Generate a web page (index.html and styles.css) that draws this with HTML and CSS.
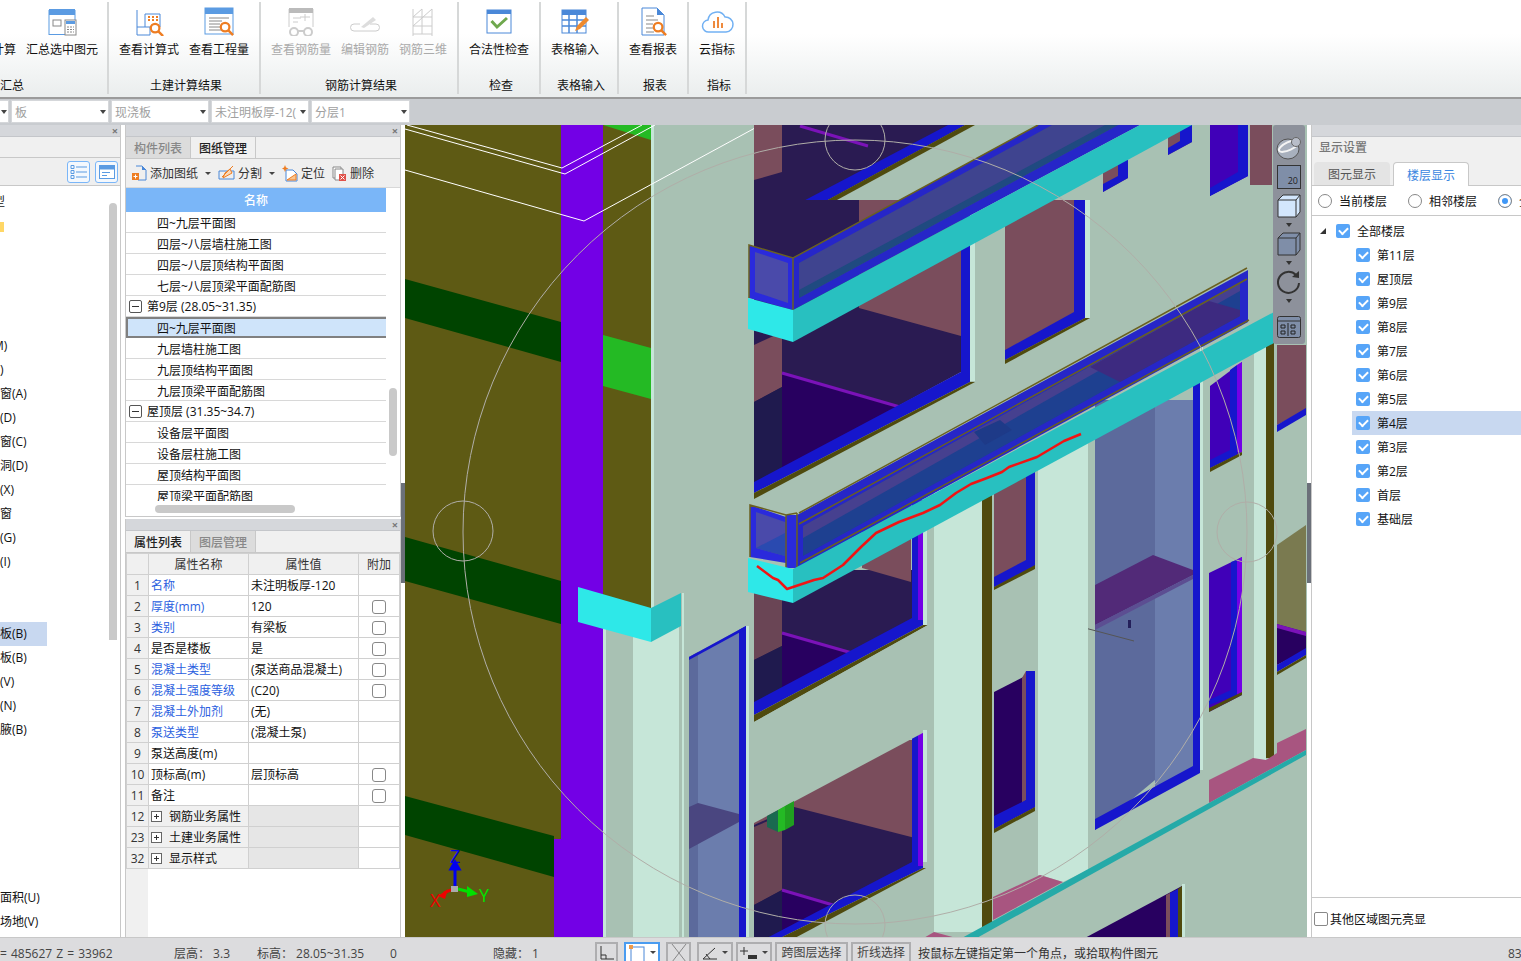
FILE: index.html
```html
<!DOCTYPE html>
<html lang="zh-CN">
  <head>
    <meta charset="UTF-8" />
    <title>GTJ</title>
    <link rel="stylesheet" href="styles.css">
  </head>
  <body>
    <svg class="defs" width="0" height="0">
      <symbol id="mag" viewBox="0 0 16 16">
        <circle cx="6.5" cy="6.5" r="4.6" fill="#fff" stroke="#ee7d22" stroke-width="2.4" />
        <path d="M10 10l5 5" stroke="#ee7d22" stroke-width="2.6" />
      </symbol>
    </svg>
    <div class="app">
      <header class="ribbon">
        <div class="group group1">
          <div class="groupBtns">
            <div class="rbtn rbtnCut"><div class="ricon"></div><span>工程量计算</span></div>
            <div class="rbtn">
              <svg class="ricon" viewBox="0 0 30 30">
                <rect x="2" y="4.500" width="26" height="24" fill="#fff" stroke="#5b9be2" />
                <rect x="2" y="3" width="26" height="6" fill="#5b9be2" />
                <rect x="6" y="14" width="8" height="6" fill="#fff" stroke="#888" />
                <rect x="18" y="14" width="11" height="15" fill="#fff" stroke="#888" />
                <rect x="19" y="15" width="9" height="3" fill="#5b9be2" />
                <path d="M20 21h7M20 23.500h7M20 26h7" stroke="#888" stroke-dasharray="2 1" />
              </svg>
              <span>汇总选中图元</span>
            </div>
          </div>
          <div class="caption captionCut">汇总</div>
        </div>
        <div class="group group2">
          <div class="groupBtns">
            <div class="rbtn">
              <svg class="ricon" viewBox="0 0 30 30">
                <path d="M3 4v25h13v-8H3M11 21V8h15v13" fill="none" stroke="#4a88d8" />
                <path d="M14 11h2M18 11h2M22 11h2M14 14h2M18 14h2M22 14h2" stroke="#ee7d22" stroke-width="2" />
                <use href="#mag" x="15" y="16" width="15" height="15" />
              </svg>
              <span>查看计算式</span>
            </div>
            <div class="rbtn">
              <svg class="ricon" viewBox="0 0 30 30">
                <rect x="1" y="2" width="28" height="26" fill="#fff" stroke="#5b9be2" />
                <rect x="1" y="2" width="28" height="6" fill="#5b9be2" />
                <path d="M5 12h20M5 15h13M5 18h11M5 21h11M5 24h13" stroke="#888" />
                <use href="#mag" x="15" y="15" width="15" height="15" />
              </svg>
              <span>查看工程量</span>
            </div>
          </div>
          <div class="caption">土建计算结果</div>
        </div>
        <div class="group group3">
          <div class="groupBtns disabled">
            <div class="rbtn">
              <svg class="ricon" viewBox="0 0 30 30">
                <path d="M3 3h24v18" fill="none" stroke="#ccc" />
                <path d="M3 3v18" stroke="#ccc" />
                <rect x="3" y="2" width="24" height="5" fill="#bbb" />
                <path d="M7 12h8M7 16h5M14 11h10M19 8v7" stroke="#ccc" />
                <circle cx="8" cy="26" r="4" fill="#fff" stroke="#ccc" stroke-width="2" />
                <circle cx="22" cy="26" r="4" fill="#fff" stroke="#ccc" stroke-width="2" />
                <path d="M12 25h6" stroke="#ccc" stroke-width="2" />
              </svg>
              <span>查看钢筋量</span>
            </div>
            <div class="rbtn">
              <svg class="ricon" viewBox="0 0 30 30">
                <path d="M6 25h-2a3 3 0 0 1 0-7h6M20 18h6a3 3 0 0 1 0 7H6" fill="none" stroke="#ccc" />
                <path d="M11 21l12-10 3 3-12 8z" fill="#ddd" />
              </svg>
              <span>编辑钢筋</span>
            </div>
            <div class="rbtn">
              <svg class="ricon" viewBox="0 0 30 30">
                <path d="M5 3v27M24 3v27M5 11h19M5 20h19M5 28h19M5 11l9-8M14 3v25M5 20l19-17" fill="none" stroke="#ccc" />
              </svg>
              <span>钢筋三维</span>
            </div>
          </div>
          <div class="caption">钢筋计算结果</div>
        </div>
        <div class="group group4">
          <div class="groupBtns">
            <div class="rbtn">
              <svg class="ricon" viewBox="0 0 30 30">
                <rect x="3" y="4" width="24" height="23" fill="#fff" stroke="#4a88d8" />
                <rect x="3" y="4" width="24" height="4" fill="#4a88d8" />
                <path d="M7.500 15l5.500 6 10-9" fill="none" stroke="#6fa84e" stroke-width="3" />
              </svg>
              <span>合法性检查</span>
            </div>
          </div>
          <div class="caption">检查</div>
        </div>
        <div class="group group5">
          <div class="groupBtns">
            <div class="rbtn">
              <svg class="ricon" viewBox="0 0 30 30">
                <rect x="2" y="4" width="24" height="23" fill="#fff" stroke="#4a88d8" />
                <rect x="2" y="4" width="24" height="5" fill="#4a88d8" />
                <path d="M2 14h24M2 20h24M9 9v18M17 9v18" stroke="#4a88d8" stroke-width="1.500" />
                <path d="M15 25l2-5 9-9 3 3-9 9z" fill="#ee8a2e" />
              </svg>
              <span>表格输入</span>
            </div>
          </div>
          <div class="caption">表格输入</div>
        </div>
        <div class="group group6">
          <div class="groupBtns">
            <div class="rbtn">
              <svg class="ricon" viewBox="0 0 30 30">
                <path d="M4 2h15l7 7v20H4z" fill="#fff" stroke="#4a88d8" />
                <path d="M19 2l7 7h-7z" fill="#4a88d8" />
                <path d="M8 10h8M8 14h12M8 18h7M8 22h7M8 26h8" stroke="#888" />
                <use href="#mag" x="14" y="15" width="15" height="15" />
              </svg>
              <span>查看报表</span>
            </div>
          </div>
          <div class="caption">报表</div>
        </div>
        <div class="group group7">
          <div class="groupBtns">
            <div class="rbtn">
              <svg class="ricon cloud" viewBox="0 0 34 26">
                <path d="M9 24a6 6 0 0 1-1-12 9 9 0 0 1 17-3 7.500 7.500 0 0 1 1 15z" fill="#fff" stroke="#72b1f3" stroke-width="1.500" />
                <path d="M14 13v7M18 9v11M22 15v5" stroke="#ee8a3e" stroke-width="2" />
              </svg>
              <span>云指标</span>
            </div>
          </div>
          <div class="caption">指标</div>
        </div>
      </header>

      <div class="filterBar">
        <div class="combo comboFirst"><i></i></div>
        <div class="combo"><span>板</span><i></i></div>
        <div class="combo"><span>现浇板</span><i></i></div>
        <div class="combo"><span>未注明板厚-12(</span><i></i></div>
        <div class="combo comboLast"><span>分层1</span><i></i></div>
      </div>

      <main class="main">
        <section class="panel leftPanel">
          <div class="panelStrip"><b>×</b></div>
          <div class="leftTabs"></div>
          <div class="leftTools">
            <div class="viewBtn">
              <svg width="18" height="16" viewBox="0 0 18 16">
                <path d="M6 3h11M6 8h11M6 13h11" stroke="#5b9be2" />
                <path d="M1 1.500h3v3h-3zM1 6.500h3v3h-3zM1 11.500h3v3h-3z" fill="none" stroke="#5b9be2" />
              </svg>
            </div>
            <div class="viewBtn">
              <svg width="16" height="14" viewBox="0 0 16 14">
                <rect x="0.500" y="0.500" width="15" height="13" fill="#fff" stroke="#5b9be2" />
                <rect x="0.500" y="0.500" width="15" height="4" fill="#5b9be2" />
                <path d="M3 7.500h8M3 10.500h5" stroke="#5b9be2" />
              </svg>
            </div>
          </div>
          <div class="leftList">
            <div class="leftScroll"></div>
            <div class="lrow cutWide">墙型</div>
            <div class="lrow"><em class="chip"></em></div>
            <div class="lrow"></div>
            <div class="lrow"></div>
            <div class="lrow"></div>
            <div class="lrow"></div>
            <div class="lrow cutWide">门M)</div>
            <div class="lrow cutFull">窗)</div>
            <div class="lrow">窗(A)</div>
            <div class="lrow cutFull">洞(D)</div>
            <div class="lrow">窗(C)</div>
            <div class="lrow">洞(D)</div>
            <div class="lrow cutFull">梁(X)</div>
            <div class="lrow">窗</div>
            <div class="lrow cutFull">梁(G)</div>
            <div class="lrow cutFull">梁(I)</div>
            <div class="lrow"></div>
            <div class="lrow"></div>
            <div class="lrow"><span class="hl">板(B)</span></div>
            <div class="lrow">板(B)</div>
            <div class="lrow cutFull">板(V)</div>
            <div class="lrow cutFull">板(N)</div>
            <div class="lrow">腋(B)</div>
            <div class="lrow"></div>
            <div class="lrow"></div>
            <div class="lrow"></div>
            <div class="lrow"></div>
            <div class="lrow"></div>
            <div class="lrow"></div>
            <div class="lrow">面积(U)</div>
            <div class="lrow">场地(V)</div>
          </div>
        </section>

        <div class="midCol">
          <section class="panel drawingPanel">
            <div class="panelStrip"><b>×</b></div>
            <div class="tabs">
              <div class="tab off">构件列表</div>
              <div class="tab on">图纸管理</div>
            </div>
            <div class="drawTools">
              <span class="tool">
                <svg width="15" height="16" viewBox="0 0 15 16"><path d="M4 1h6l4 4v10H6" fill="none" stroke="#4a88d8" /><path d="M10 1l4 4h-4z" fill="#4a88d8" /><rect x="0" y="8" width="7" height="7" fill="#ee7d22" /><path d="M3.500 9.500v4M1.500 11.500h4" stroke="#fff" /></svg>
                添加图纸<i class="caret"></i>
              </span>
              <span class="tool">
                <svg width="17" height="16" viewBox="0 0 17 16"><path d="M1 6h15v8H1z" fill="none" stroke="#4a88d8" /><path d="M4 12l8-8 3-3M5 13l2-5 5-4 2 4z" fill="#fbd9b8" stroke="#ee7d22" /></svg>
                分割<i class="caret"></i>
              </span>
              <span class="tool">
                <svg width="16" height="17" viewBox="0 0 16 17"><path d="M4 5h7l4 4v7H4z" fill="#fff" stroke="#4a88d8" /><path d="M5 15l9-6v6z" fill="#f9c58f" stroke="#ee7d22" /><path d="M3 0l1 2.500 2.500 1-2.500 1-1 2.500-1-2.500-2-1 2-1z" fill="#ee7d22" /></svg>
                定位
              </span>
              <span class="tool">
                <svg width="15" height="15" viewBox="0 0 15 15"><path d="M1 1h8v11H1z" fill="#fff" stroke="#888" /><path d="M3 3h8v11H3z" fill="#fff" stroke="#888" /><rect x="7" y="8" width="7" height="7" fill="#e0524a" /><path d="M8.500 9.500l4 4m0-4l-4 4" stroke="#fff" /></svg>
                删除
              </span>
            </div>
            <div class="drawList">
              <div class="drawHead">名称</div>
              <div class="drow">四~九层平面图</div>
              <div class="drow">四层~八层墙柱施工图</div>
              <div class="drow">四层~八层顶结构平面图</div>
              <div class="drow">七层~八层顶梁平面配筋图</div>
              <div class="drow grp"><i class="minus"></i>第9层 (28.05~31.35)</div>
              <div class="drow sel">四~九层平面图</div>
              <div class="drow">九层墙柱施工图</div>
              <div class="drow">九层顶结构平面图</div>
              <div class="drow">九层顶梁平面配筋图</div>
              <div class="drow grp"><i class="minus"></i>屋顶层 (31.35~34.7)</div>
              <div class="drow">设备层平面图</div>
              <div class="drow">设备层柱施工图</div>
              <div class="drow">屋顶结构平面图</div>
              <div class="drow">屋顶梁平面配筋图</div>
              <div class="vbar"></div>
              <div class="hbarTrack"><div class="hbar"></div></div>
            </div>
          </section>

          <section class="panel propPanel">
            <div class="panelStrip"><b>×</b></div>
            <div class="tabs">
              <div class="tab on">属性列表</div>
              <div class="tab off">图层管理</div>
            </div>
            <div class="propBody">
              <table class="props">
                <tr class="phead"><th></th><th>属性名称</th><th>属性值</th><th>附加</th></tr>
                <tr><td class="n">1</td><td class="lnk">名称</td><td>未注明板厚-120</td><td></td></tr>
                <tr><td class="n">2</td><td class="lnk">厚度(mm)</td><td>120</td><td class="ck"><i></i></td></tr>
                <tr><td class="n">3</td><td class="lnk">类别</td><td>有梁板</td><td class="ck"><i></i></td></tr>
                <tr><td class="n">4</td><td>是否是楼板</td><td>是</td><td class="ck"><i></i></td></tr>
                <tr><td class="n">5</td><td class="lnk">混凝土类型</td><td>(泵送商品混凝土)</td><td class="ck"><i></i></td></tr>
                <tr><td class="n">6</td><td class="lnk">混凝土强度等级</td><td>(C20)</td><td class="ck"><i></i></td></tr>
                <tr><td class="n">7</td><td class="lnk">混凝土外加剂</td><td>(无)</td><td></td></tr>
                <tr><td class="n">8</td><td class="lnk">泵送类型</td><td>(混凝土泵)</td><td></td></tr>
                <tr><td class="n">9</td><td>泵送高度(m)</td><td></td><td></td></tr>
                <tr><td class="n">10</td><td>顶标高(m)</td><td>层顶标高</td><td class="ck"><i></i></td></tr>
                <tr><td class="n">11</td><td>备注</td><td></td><td class="ck"><i></i></td></tr>
                <tr class="sect"><td class="n">12</td><td><i class="plus"></i>钢筋业务属性</td><td></td><td></td></tr>
                <tr class="sect"><td class="n">23</td><td><i class="plus"></i>土建业务属性</td><td></td><td></td></tr>
                <tr class="sect"><td class="n">32</td><td><i class="plus"></i>显示样式</td><td></td><td></td></tr>
              </table>
              <div class="numFill"></div>
            </div>
          </section>
        </div>

        <div class="viewport">
          <svg class="scene" width="902" height="814" viewBox="405 125 902 814">
            <rect x="405" y="125" width="902" height="814" fill="#a8c1b3" />
            <!-- left wall -->
            <rect x="405" y="125" width="198" height="814" fill="#5e5a14" />
            <rect x="603" y="125" width="48" height="490" fill="#5e5a14" />
            <path d="M405 279L561 322V362L405 318zM405 537L561 581V624L405 581zM405 796L554 836V877L405 835z" fill="#004400" />
            <path d="M603 335L651 348V399L603 386zM603 125L651 140V125z" fill="#24ba24" />
            <path d="M561 125H603V939H554V839H561z" fill="#7300e6" />
            <rect x="651" y="125" width="3" height="485" fill="#c6e6d8" />
            <path d="M407 125L562 168L642 125M405 129L565 174L655 125M405 170L584 221L755 128" fill="none" stroke="#fff" />
            <!-- lower column -->
            <rect x="603" y="615" width="3" height="324" fill="#c6e6d8" />
            <rect x="606" y="615" width="27" height="324" fill="#a8c1b3" />
            <rect x="633" y="625" width="46" height="314" fill="#c6e6d8" />
            <rect x="682" y="593" width="2" height="346" fill="#c6e6d8" />
            <!-- narrow window -->
            <path d="M689 657L746 626V939H689z" fill="#6b7dad" />
            <path d="M689 657L698 652V939H689z" fill="#5c6a9c" />
            <path d="M689 807L698 803L739 814V822L689 849z" fill="#4a4680" />
            <path d="M739 630L746 626V939H739z" fill="#1616cc" />
            <path d="M689 657L746 626V629L689 660z" fill="#1616cc" />
            <rect x="746" y="626" width="3" height="313" fill="#c6e6d8" />
            <!-- row 0 -->
            <path d="M754 125H965L754 240z" fill="#2a1b52" />
            <path d="M754 125H782V172L754 180z" fill="#7a4d5c" />
            <path d="M800 126L868 146" stroke="#7b12b8" stroke-width="3" />
            <path d="M754 227L948 125H965L754 240z" fill="#1616cc" />
            <path d="M754 240L965 125H975L754 245z" fill="#4f4a0e" />
            <!-- row 1 -->
            <path d="M754 200H961V372L754 484z" fill="#2a1b52" />
            <path d="M859 308L961 336V200H859z" fill="#7a4d5c" />
            <path d="M754 345L782 332V387L754 402z" fill="#7a4d5c" />
            <path d="M754 402L782 387V470L754 484z" fill="#1f1a4e" />
            <path d="M782 374L900 408L782 472z" fill="#280060" />
            <path d="M782 373L900 407" stroke="#7b12b8" stroke-width="3" />
            <path d="M961 200H970V382L754 493V482L961 372z" fill="#1616cc" />
            <path d="M754 493L970 382H975L754 499z" fill="#4f4a0e" />
            <rect x="970" y="200" width="5" height="181" fill="#c6e6d8" />
            <!-- row 1 middle -->
            <path d="M1005 200H1085V318L1005 360z" fill="#7a4d5c" />
            <path d="M1074 200H1085V318L1005 360V350L1074 312z" fill="#1616cc" />
            <path d="M1005 360L1085 318H1090L1005 364z" fill="#4f4a0e" />
            <rect x="1085" y="200" width="5" height="118" fill="#c6e6d8" />
            <!-- row 2 -->
            <path d="M754 570H923V622L754 712z" fill="#2a1b52" />
            <path d="M862 568L911 582V500H862z" fill="#7a4d5c" />
            <path d="M754 590H782V646L754 660z" fill="#6a4555" />
            <path d="M754 660L782 646V695L754 707z" fill="#1f1a4e" />
            <path d="M782 634L852 654L782 692z" fill="#280060" />
            <path d="M782 633L852 653" stroke="#7b12b8" stroke-width="3" />
            <path d="M912 500H923V625L754 715V702L912 618z" fill="#1616cc" />
            <path d="M918 500H923V620H918z" fill="#7300e6" />
            <path d="M754 715L923 625H928L754 722z" fill="#4f4a0e" />
            <rect x="923" y="500" width="4" height="125" fill="#c6e6d8" />
            <!-- row 3 -->
            <path d="M754 800H923V860L778 939H754z" fill="#2a1b52" />
            <path d="M754 740H923V840L794 807L754 825z" fill="#7a4d5c" />
            <path d="M754 827L782 815V890L754 905z" fill="#6a4555" />
            <path d="M754 905L782 890V939H754z" fill="#1f1a4e" />
            <path d="M782 891L833 906L782 933z" fill="#280060" />
            <path d="M782 890L833 905" stroke="#7b12b8" stroke-width="3" />
            <path d="M912 730H923V868L778 939H765L912 862z" fill="#1616cc" />
            <path d="M918 730H923V866H918z" fill="#7300e6" />
            <path d="M778 939L923 868H926L793 939z" fill="#4f4a0e" />
            <!-- sage band between row 2 and 3 -->
            <path d="M754 722L928 625H934V727L754 823z" fill="#a8c1b3" />
            <rect x="923" y="730" width="4" height="132" fill="#c6e6d8" />
            <path d="M767 816L778 810V832L767 827z" fill="#1a6a50" />
            <path d="M778 810L785 806V830L778 832z" fill="#24ba24" />
            <path d="M785 806L794 801V825L785 830z" fill="#209e20" />
            <!-- windows, column side -->
            <path d="M994 470H1035V567L994 587z" fill="#7a4d5c" />
            <path d="M1026 470H1035V567L994 587V577L1026 560z" fill="#1616cc" />
            <path d="M994 587L1035 565V569L994 590z" fill="#4f4a0e" />
            <path d="M994 692L1035 671V807L994 829z" fill="#280060" />
            <path d="M1022 678L1026 671V800L1022 805z" fill="#7a4d5c" />
            <path d="M1026 671L1035 671V807L994 829V816L1026 800z" fill="#1616cc" />
            <path d="M994 829L1035 807V811L994 833z" fill="#4f4a0e" />
            <!-- big window -->
            <path d="M1095 400H1155V780L1095 830z" fill="#5c6a9c" />
            <path d="M1155 400H1193V770L1155 790z" fill="#6b7dad" />
            <path d="M1095 585L1153 555L1193 570V575L1095 625z" fill="#522a78" />
            <path d="M1095 625L1193 575V579L1095 630z" fill="#5c4e92" />
            <path d="M1193 360H1200V773L1095 830V819L1193 766z" fill="#1616cc" />
            <path d="M1085 628L1134 641" stroke="#555" />
            <rect x="1128" y="620" width="3" height="8" fill="#24205a" />
            <!-- far right windows -->
            <path d="M1210 386L1242 362V452L1210 468z" fill="#4000b8" />
            <path d="M1230 370L1237 365V455L1210 468V460L1230 450z" fill="#1616cc" />
            <path d="M1237 365L1242 362V452H1237z" fill="#7300e6" />
            <path d="M1210 468L1242 452V455L1210 472z" fill="#4f4a0e" />
            <path d="M1209 573L1242 557V695L1209 712z" fill="#4000b8" />
            <path d="M1231 562L1237 560V695L1209 705V700L1231 690z" fill="#1616cc" />
            <path d="M1237 560L1242 557V695H1237z" fill="#7300e6" />
            <path d="M1209 708L1242 692V695L1209 712z" fill="#4f4a0e" />
            <rect x="1254" y="340" width="12" height="420" fill="#c6e6d8" />
            <rect x="1266" y="340" width="8" height="418" fill="#4f4a0e" />
            <path d="M1277 345H1306V410L1277 425z" fill="#7a4d5c" />
            <path d="M1277 425L1306 408V415L1277 432z" fill="#1616cc" />
            <path d="M1277 545L1306 525V632L1277 624z" fill="#7a7a50" />
            <path d="M1277 624L1306 632V650L1277 665z" fill="#280060" />
            <path d="M1277 624L1306 632V636L1277 628z" fill="#7b12b8" />
            <path d="M1277 665L1306 648V655L1277 672z" fill="#1616cc" />
            <path d="M1277 672L1306 655V658L1277 675z" fill="#4f4a0e" />
            <!-- pale columns -->
            <rect x="934" y="490" width="48" height="442" fill="#c6e6d8" />
            <rect x="982" y="490" width="10" height="438" fill="#4f4a0e" />
            <path d="M1038 440H1088V870L1063 882L1040 875H1038z" fill="#c6e6d8" />
            <rect x="1200" y="340" width="3" height="430" fill="#c6e6d8" />
            <!-- pink plinth, teal line -->
            <path d="M1209 780L1253 758L1266 760L1277 753V743L1306 729V750L1209 803z" fill="#a85580" />
            <path d="M993 897L1040 875L1063 882L993 920z" fill="#a85580" />
            <path d="M922 939L934 932L960 939z" fill="#a85580" />
            <path d="M975 939L1306 755V939z" fill="#a8c1b3" />
            <path d="M960 939L1306 750V755L975 939z" fill="#25aaa8" />
            <path d="M1083 939L1182 886V939z" fill="#280060" />
            <path d="M1166 895L1170 893V939H1166z" fill="#7a4d5c" />
            <path d="M1170 893L1178 889V939H1170z" fill="#1616cc" />
            <path d="M1178 889L1182 886V939H1178z" fill="#4f4a0e" />
            <rect x="1182" y="884" width="3" height="55" fill="#c6e6d8" />
            <!-- upper right pieces over the sage -->
            <path d="M1103 160H1128V178L1103 192z" fill="#7a4d5c" />
            <path d="M1118 160H1128V178L1103 192V184L1118 176z" fill="#1616cc" />
            <path d="M1168 125H1192V142L1168 155z" fill="#7a4d5c" />
            <path d="M1180 125H1192V142L1168 155V148L1180 141z" fill="#1616cc" />
            <path d="M1210 125H1248V176L1210 196z" fill="#4000b8" />
            <path d="M1238 125H1248V176L1210 196V188L1238 172z" fill="#1616cc" />
            <rect x="1250" y="125" width="22" height="60" fill="#7a4d5c" />
            <!-- balcony 1 -->
            <path d="M793 258L1038 125H1140L793 310z" fill="#2626c8" />
            <path d="M799 263L1052 125H1118L799 298z" fill="#3f448f" />
            <path d="M799 290L1105 125H1118L799 298z" fill="#1f4a80" />
            <path d="M749 245L793 258V310L749 298z" fill="#2a2adc" />
            <path d="M755 252L788 263V303L755 292z" fill="#4a4aaa" />
            <path d="M749 298L749 245L793 258L1038 125M793 258V310" fill="none" stroke="#6a6020" stroke-width="1.500" />
            <path d="M748 298L793 310V342L748 329z" fill="#2ee8e8" />
            <path d="M793 310L1140 125H1192L793 342z" fill="#28c0c0" />
            <!-- balcony 2 -->
            <path d="M797 515L1248 270V322L797 568z" fill="#2626c8" />
            <path d="M803 526L1240 283V316L803 556z" fill="#1e4090" />
            <path d="M803 526L1240 283V291L803 538z" fill="#46408f" />
            <path d="M1090 367L1209 301L1240 310V316L1120 382z" fill="#3d2a80" />
            <path d="M974 432L1000 420L1012 430L985 445z" fill="#1e3a88" />
            <path d="M799 513L1247 268M799 524L1247 279" stroke="#6a6020" stroke-width="1.500" />
            <path d="M800 563L1249 320" stroke="#6a6020" stroke-width="1.500" />
            <path d="M750 505L786 517V563L750 557z" fill="#2a2adc" />
            <path d="M756 512L785 522V556L756 548z" fill="#4a4aaa" />
            <path d="M756 548L785 533V556z" fill="#2a4ab0" />
            <path d="M786 515H797V568H786z" fill="#2a2adc" />
            <path d="M750 557V505L786 515L797 513M786 515V568M797 513V568" fill="none" stroke="#6a6020" stroke-width="1.500" />
            <path d="M748 558L793 569V603L748 592z" fill="#2ee8e8" />
            <path d="M793 569L1274 312V343L793 603z" fill="#28c0c0" />
            <!-- red line -->
            <path d="M757 566L773 578L778 580L787 589L814 580L823 578L843 565L861 547L876 533L899 522L923 513L940 505L956 493L971 484L987 478L1002 472L1009 467L1037 457L1064 441L1081 434" fill="none" stroke="#f01414" stroke-width="2.500" stroke-linejoin="round" />
            <!-- wedge -->
            <path d="M578 587L651 608V642L578 622z" fill="#2ee8e8" />
            <path d="M651 608L681 593V626L651 642z" fill="#28c0c0" />
            <!-- orbit -->
            <g fill="none" stroke="#b0aea8">
              <circle cx="855" cy="532" r="392" />
              <circle cx="463" cy="531" r="30" />
              <circle cx="855" cy="140" r="30" />
              <circle cx="1247" cy="532" r="30" />
              <circle cx="855" cy="925" r="30" />
            </g>
            <!-- axis -->
            <path d="M455 886V868M451 869L455 862L459 869z" stroke="#0000f0" stroke-width="3" fill="#0000f0" />
            <path d="M458 889L470 892" stroke="#00e000" stroke-width="3" />
            <path d="M467 886L478 894L467 897z" fill="#00e000" />
            <path d="M453 889L444 893" stroke="#f00000" stroke-width="3" />
            <path d="M448 889L438 896L445 899z" fill="#f00000" />
            <rect x="451" y="886" width="7" height="6" fill="#aaa" />
            <text class="axis axisZ" x="450" y="863">Z</text>
            <text class="axis axisX" x="430" y="907">X</text>
            <text class="axis axisY" x="479" y="902">Y</text>
          </svg>

          <div class="viewTools">
            <svg width="26" height="24" viewBox="0 0 26 24">
              <ellipse cx="12" cy="13" rx="11" ry="10" fill="#a8b0bd" stroke="#555" />
              <ellipse cx="13" cy="10" rx="11" ry="4" transform="rotate(-25 13 10)" fill="none" stroke="#f4f4f4" stroke-width="2" />
              <circle cx="20" cy="6" r="4.500" fill="#b8bdc8" stroke="#666" />
            </svg>
            <div class="tool2d">20</div>
            <svg width="24" height="24" viewBox="0 0 24 24">
              <path d="M1 6h18v17H1zM1 6l5-5h17v17l-4 5" fill="#d3e6fc" stroke="#333" />
              <path d="M19 6l4-5" stroke="#333" />
            </svg>
            <i class="vcaret"></i>
            <svg width="24" height="24" viewBox="0 0 24 24">
              <path d="M1 6h18v17H1zM1 6l5-5h17v17l-4 5M19 6l4-5" fill="#7f8ea8" stroke="#333" />
            </svg>
            <i class="vcaret"></i>
            <svg width="24" height="24" viewBox="0 0 24 24">
              <path d="M19 5a10.500 10.500 0 1 0 3 8" fill="none" stroke="#333" stroke-width="2" />
              <path d="M15 7l7 1V1z" fill="#333" />
            </svg>
            <i class="vcaret"></i>
            <svg class="toolLast" width="24" height="22" viewBox="0 0 24 22">
              <rect x="0.500" y="0.500" width="23" height="21" rx="2" fill="#7f8ea8" stroke="#333" />
              <path d="M1 5h22" stroke="#333" />
              <path d="M4 9h4v3H4zM4 15h4v3H4zM14 9h4v3h-4zM14 15h4v3h-4zM11 7v13" fill="none" stroke="#222" />
            </svg>
          </div>
        </div>

        <section class="panel rightPanel">
          <div class="panelStrip"></div>
          <div class="rightTitle">显示设置</div>
          <div class="rightTabs">
            <div class="rtab">图元显示</div>
            <div class="rtab rtabOn">楼层显示</div>
          </div>
          <div class="radios">
            <label class="radio"><i></i>当前楼层</label>
            <label class="radio"><i></i>相邻楼层</label>
            <label class="radio radioOn"><i></i>全部楼层</label>
          </div>
          <div class="tree">
            <div class="trow root"><em class="tri"></em><i class="cb"></i>全部楼层</div>
            <div class="trow"><i class="cb"></i>第11层</div>
            <div class="trow"><i class="cb"></i>屋顶层</div>
            <div class="trow"><i class="cb"></i>第9层</div>
            <div class="trow"><i class="cb"></i>第8层</div>
            <div class="trow"><i class="cb"></i>第7层</div>
            <div class="trow"><i class="cb"></i>第6层</div>
            <div class="trow"><i class="cb"></i>第5层</div>
            <div class="trow cur"><i class="cb"></i>第4层</div>
            <div class="trow"><i class="cb"></i>第3层</div>
            <div class="trow"><i class="cb"></i>第2层</div>
            <div class="trow"><i class="cb"></i>首层</div>
            <div class="trow"><i class="cb"></i>基础层</div>
          </div>
          <div class="rightFoot"><i class="plainCb"></i>其他区域图元亮显</div>
        </section>
        <div class="grip gripLeft"></div>
        <div class="grip gripRight"></div>
      </main>

      <footer class="status">
        <span class="stCoord">= 485627 Z = 33962</span>
        <span class="stFloor">层高：&nbsp;3.3</span>
        <span class="stElev">标高：&nbsp;28.05~31.35</span>
        <span class="stZero">0</span>
        <span class="stHide">隐藏：&nbsp;1</span>
        <div class="sbtn sbOrtho">
          <svg width="16" height="16" viewBox="0 0 16 16"><path d="M2 1v13h13M2 10h5v4" fill="none" stroke="#333" /></svg>
        </div>
        <div class="sbtn sbSel">
          <svg width="18" height="18" viewBox="0 0 18 18"><rect x="3" y="3" width="13" height="15" fill="#fff" stroke="#4a88d8" /><rect x="1" y="1" width="4" height="4" fill="#ee9a4a" /></svg>
          <i class="caret"></i>
        </div>
        <div class="sbtn sbCross">
          <svg width="20" height="20" viewBox="0 0 20 20"><path d="M3 1l14 18M17 1L3 19" stroke="#888" /></svg>
        </div>
        <div class="sbtn sbDrop">
          <svg width="16" height="16" viewBox="0 0 16 16"><path d="M1 14h14M1 14L13 3M4 9l4 5" fill="none" stroke="#333" /></svg>
          <i class="caret"></i>
        </div>
        <div class="sbtn sbDrop">
          <svg width="18" height="16" viewBox="0 0 18 16"><path d="M4 2v8M0 6h8" stroke="#333" /><rect x="8" y="10" width="9" height="4" fill="#333" /></svg>
          <i class="caret"></i>
        </div>
        <div class="sbtn sbText sbLayer">跨图层选择</div>
        <div class="sbtn sbText sbPoly">折线选择</div>
        <span class="stHint">按鼠标左键指定第一个角点，或拾取构件图元</span>
        <span class="stEnd">83</span>
      </footer>
    </div>
  </body>
</html>
```
FILE: styles.css
```css
* {
  box-sizing: border-box;
}
html,
body {
  margin: 0;
  padding: 0;
  background: #fff;
}
body {
  font-family: "Open Sans", "Noto Sans CJK SC", "Liberation Sans", sans-serif;
  font-size: 12px;
  color: #111;
  overflow: hidden;
}
i,
em {
  font-style: normal;
  display: inline-block;
}
.defs {
  position: absolute;
}
.app {
  width: 1521px;
  height: 961px;
  display: flex;
  flex-direction: column;
  overflow: hidden;
}

/* ribbon */
.ribbon {
  height: 99px;
  flex: none;
  display: flex;
  background: linear-gradient(#fff 0, #fff 35%, #ebeeee 97%);
  border-bottom: 2px solid #9b9b9b;
  padding-top: 2px;
}
.group {
  display: flex;
  flex-direction: column;
  align-items: stretch;
  border-right: 2px solid #d6d8d8;
  margin-bottom: 3px;
  flex: none;
}
.group1 {
  width: 109px;
  overflow: hidden;
}
.group2 {
  width: 152px;
}
.group3 {
  width: 198px;
}
.group4 {
  width: 82px;
}
.group5 {
  width: 78px;
}
.group5 .groupBtns {
  padding-right: 8px;
}
.group6 {
  width: 70px;
}
.group7 {
  width: 58px;
}
.groupBtns {
  display: flex;
  gap: 10px;
  height: 77px;
  justify-content: center;
}
.group1 .groupBtns {
  justify-content: flex-end;
  width: 109px;
  padding-right: 11px;
}
.rbtn {
  display: flex;
  flex-direction: column;
  align-items: center;
  flex: none;
  white-space: nowrap;
  line-height: 18px;
}
.rbtn span {
  margin-top: 5px;
}
.ricon {
  display: block;
  width: 30px;
  height: 30px;
  margin-top: 4px;
}
.cloud {
  width: 34px;
  height: 26px;
  margin: 6px 0 2px;
}
.disabled {
  color: #aaa;
}
.caption {
  text-align: center;
  line-height: 16px;
  padding-left: 4px;
  white-space: nowrap;
}
.captionCut {
  text-align: left;
  padding-left: 0;
}

/* filter bar */
.filterBar {
  height: 26px;
  flex: none;
  display: flex;
  gap: 2px;
  align-items: flex-start;
  padding-top: 1px;
  background: #c9ccd0;
}
.combo {
  width: 98px;
  height: 23px;
  background: #fff;
  border: 1px solid #d5d7da;
  color: #a0a0a0;
  padding: 0 3px;
  line-height: 23px;
  position: relative;
  white-space: nowrap;
  overflow: hidden;
}
.combo span {
  display: block;
  width: 84px;
  height: 21px;
  overflow: hidden;
}
.comboFirst {
  width: 9px;
  border-left: 0;
}
.comboLast {
  width: 99px;
}
.combo i {
  position: absolute;
  right: 2px;
  top: 9px;
  border: 3px solid transparent;
  border-top: 4px solid #444;
  border-bottom: 0;
}
.comboFirst i {
  right: 1px;
}

/* main layout */
.main {
  height: 813px;
  flex: none;
  display: flex;
  gap: 4px;
  background: #fff;
  border-bottom: 1px solid #c8c8c8;
  position: relative;
}
.panel {
  background: #fff;
  display: flex;
  flex-direction: column;
  overflow: hidden;
}
.panelStrip {
  height: 12px;
  flex: none;
  background: #d5d7db;
  border-bottom: 1px solid #c4c6ca;
  text-align: right;
  padding-right: 2px;
  line-height: 11px;
  color: #777;
  font-size: 11px;
}
.panelStrip b {
  font-weight: 700;
}

/* left list */
.leftPanel {
  width: 121px;
  flex: none;
  border-right: 1px solid #c8c8c8;
}
.leftTabs {
  height: 21px;
  background: #f0f0f0;
  border-bottom: 1px solid #c8c8c8;
  flex: none;
}
.leftTools {
  height: 28px;
  flex: none;
  background: #efefef;
  border-bottom: 1px solid #c8c8c8;
  display: flex;
  justify-content: flex-end;
  align-items: center;
  gap: 5px;
  padding-right: 2px;
}
.viewBtn {
  width: 23px;
  height: 22px;
  border: 1px solid #7ab6f8;
  border-radius: 3px;
  background: #f4f8fd;
  display: flex;
  align-items: center;
  justify-content: center;
}
.leftList {
  flex: 1;
  position: relative;
  padding-top: 4px;
  overflow: hidden;
}
.leftScroll {
  position: absolute;
  right: 3px;
  top: 17px;
  width: 8px;
  height: 437px;
  background: #c9c9c9;
  border-radius: 4px 4px 0 0;
}
.lrow {
  height: 24px;
  line-height: 24px;
  white-space: nowrap;
}
.cutFull {
  margin-left: -12px;
}
.cutWide {
  margin-left: -19px;
}
.chip {
  width: 4px;
  height: 10px;
  background: #ffd766;
  vertical-align: middle;
}
.hl {
  display: block;
  width: 47px;
  background: #c8d8f0;
}

/* middle column */
.midCol {
  width: 276px;
  display: flex;
  flex-direction: column;
  gap: 2px;
  flex: none;
}
.drawingPanel {
  height: 392px;
  flex: none;
  border: 1px solid #c8c8c8;
  border-top: 0;
}
.propPanel {
  flex: 1;
  border-right: 1px solid #c8c8c8;
  border-left: 1px solid #c8c8c8;
}
.tabs {
  height: 22px;
  flex: none;
  display: flex;
  background: #f0f0f0;
  border-bottom: 1px solid #c8c8c8;
}
.tab {
  width: 65px;
  text-align: center;
  line-height: 23px;
  font-weight: 500;
  border-right: 1px solid #c8c8c8;
}
.tab.off {
  background: #dcdcdc;
  color: #888;
}
.tab.on {
  background: #f0f0f0;
  color: #222;
}
.drawTools {
  height: 29px;
  flex: none;
  background: #efefef;
  border-bottom: 1px solid #d8d8d8;
  display: flex;
  align-items: center;
  gap: 7px;
  padding-left: 6px;
  color: #333;
}
.tool {
  display: flex;
  align-items: center;
  gap: 3px;
  white-space: nowrap;
}
.caret {
  margin-left: 4px;
  border: 3px solid transparent;
  border-top: 3px solid #444;
  border-bottom: 0;
}
.drawList {
  flex: 1;
  position: relative;
  overflow: hidden;
}
.drawHead {
  width: 260px;
  height: 24px;
  line-height: 26px;
  background: #7ab6f8;
  color: #fff;
  text-align: center;
  font-weight: 500;
}
.drow {
  width: 260px;
  height: 21px;
  padding-top: 1px;
  line-height: 21px;
  border-bottom: 1px solid #d8d8d8;
  padding-left: 31px;
  white-space: nowrap;
}
.drow.grp {
  padding-left: 3px;
  display: flex;
  align-items: center;
  gap: 5px;
}
.drow.sel {
  background: #cfe4fa;
  border-top: 2px solid #808080;
  border-bottom: 2px solid #808080;
  border-left: 2px solid #808080;
  padding-top: 0;
  line-height: 19px;
  padding-left: 29px;
}
.minus {
  width: 13px;
  height: 13px;
  border: 1px solid #555;
  border-radius: 2px;
  position: relative;
  background: #fff;
}
.minus::after {
  content: "";
  position: absolute;
  left: 2px;
  top: 5px;
  width: 7px;
  height: 1px;
  background: #333;
}
.vbar {
  position: absolute;
  right: 3px;
  top: 200px;
  width: 8px;
  height: 68px;
  background: #c9c9c9;
  border-radius: 4px;
}
.hbarTrack {
  position: absolute;
  left: 0;
  right: 0;
  bottom: 0;
  height: 15px;
  background: #fff;
  padding: 4px 0 0 29px;
}
.hbar {
  width: 140px;
  height: 8px;
  background: #c9c9c9;
  border-radius: 4px;
}

/* properties */
.propBody {
  flex: 1;
  position: relative;
  overflow: hidden;
}
.numFill {
  width: 22px;
  height: 100%;
  background: #f0f0f0;
}
.props {
  border-collapse: collapse;
  table-layout: fixed;
  width: 274px;
}
.props th,
.props td {
  height: 21px;
  border: 1px solid #d0d0d0;
  padding: 2px 2px 0;
  font-weight: 400;
  line-height: 18px;
  white-space: nowrap;
  overflow: hidden;
}
.props th {
  background: #f0f0f0;
  color: #333;
  text-align: center;
}
.props th:nth-child(1),
.props td:nth-child(1) {
  width: 22px;
}
.props th:nth-child(2) {
  width: 100px;
}
.props th:nth-child(3) {
  width: 110px;
}
.props .n {
  background: #f0f0f0;
  color: #333;
  text-align: center;
  padding: 2px 0 0;
}
.props .lnk {
  color: #2c5fe0;
}
.ck i {
  display: block;
  margin: 0 auto 1px;
  width: 14px;
  height: 14px;
  border: 1px solid #888;
  border-radius: 3px;
  background: #fff;
}
.sect td:nth-child(3) {
  background: #e6e6e6;
}
.sect td:nth-child(2) {
  background: #f0f0f0;
}
.plus {
  width: 11px;
  height: 11px;
  margin: 0 7px 0 0;
  border: 1px solid #666;
  vertical-align: -1px;
  position: relative;
  background: #fff;
}
.plus::before,
.plus::after {
  content: "";
  position: absolute;
  background: #333;
}
.plus::before {
  left: 2px;
  top: 4px;
  width: 5px;
  height: 1px;
}
.plus::after {
  left: 4px;
  top: 2px;
  width: 1px;
  height: 5px;
}

/* 3d view */
.viewport {
  width: 902px;
  flex: none;
  position: relative;
  overflow: hidden;
}
.scene {
  display: block;
}
.axis {
  font-size: 18px;
}
.axisZ {
  fill: #0000f0;
}
.axisX {
  fill: #f00000;
}
.axisY {
  fill: #00e000;
}
.viewTools {
  position: absolute;
  left: 868px;
  top: 0;
  width: 32px;
  height: 219px;
  background: #8d919b;
  border-radius: 3px;
  display: flex;
  flex-direction: column;
  align-items: center;
  padding-top: 11px;
  gap: 5px;
}
.viewTools svg {
  flex: none;
}
.tool2d {
  width: 24px;
  height: 24px;
  flex: none;
  background: #7f8ea8;
  border: 1px solid #333;
  color: #222;
  font-size: 9px;
  text-align: right;
  line-height: 30px;
  padding-right: 2px;
}
.vcaret {
  flex: none;
  border: 3px solid transparent;
  border-top: 4px solid #333;
  border-bottom: 0;
}
.toolLast {
  margin-top: 8px;
}
.grip {
  position: absolute;
  top: 358px;
  width: 4px;
  height: 100px;
  background: #6b7079;
}
.gripLeft {
  left: 401px;
}
.gripRight {
  left: 1307px;
}

/* right panel */
.rightPanel {
  width: 210px;
  flex: none;
  border-left: 1px solid #c8c8c8;
}
.rightTitle {
  height: 25px;
  flex: none;
  line-height: 22px;
  padding-left: 7px;
  color: #777;
  background: #f0f0f0;
  font-weight: 500;
}
.rightTabs {
  height: 24px;
  flex: none;
  background: #f0f0f0;
  border-bottom: 1px solid #c8c8c8;
  display: flex;
  gap: 3px;
  padding-left: 2px;
}
.rtab {
  width: 76px;
  text-align: center;
  line-height: 26px;
  color: #555;
  background: #e4e4e4;
  border-radius: 4px 4px 0 0;
}
.rtabOn {
  height: 24px;
  background: #fff;
  color: #3a86e0;
  border: 1px solid #c8c8c8;
  border-bottom: 0;
}
.radios {
  height: 30px;
  flex: none;
  display: flex;
  align-items: center;
  border-bottom: 1px solid #c8c8c8;
  padding-left: 6px;
  white-space: nowrap;
  overflow: hidden;
}
.radio {
  width: 90px;
  display: flex;
  align-items: center;
  gap: 7px;
  flex: none;
}
.radio i {
  width: 14px;
  height: 14px;
  border: 1px solid #888;
  border-radius: 50%;
  background: #fff;
  flex: none;
}
.radioOn i {
  background: #3f97f7;
  box-shadow: inset 0 0 0 3px #fff;
}
.tree {
  flex: 1;
  padding-top: 3px;
  border-bottom: 1px solid #c8c8c8;
}
.trow {
  height: 24px;
  display: flex;
  align-items: center;
  gap: 7px;
  padding-left: 44px;
}
.trow.root {
  padding-left: 24px;
  position: relative;
}
.trow.cur {
  background: #c8d8f0;
  margin-left: 40px;
  padding-left: 4px;
}
.tri {
  position: absolute;
  left: 8px;
  top: 9px;
  border-left: 6px solid transparent;
  border-bottom: 6px solid #333;
}
.cb {
  width: 14px;
  height: 14px;
  border-radius: 2px;
  background: #57a5f8;
  position: relative;
  flex: none;
}
.cb::after {
  content: "";
  position: absolute;
  left: 3px;
  top: 3px;
  width: 7px;
  height: 4px;
  border-left: 2px solid #fff;
  border-bottom: 2px solid #fff;
  transform: rotate(-45deg);
}
.rightFoot {
  height: 39px;
  flex: none;
  display: flex;
  align-items: center;
  gap: 2px;
  padding: 2px 0 0 2px;
}
.plainCb {
  width: 14px;
  height: 14px;
  border: 1px solid #888;
  border-radius: 2px;
  flex: none;
}

/* status bar */
.status {
  height: 23px;
  flex: none;
  background: #dcdcde;
  display: flex;
  color: #444;
  line-height: 15px;
  white-space: nowrap;
  overflow: hidden;
}
.status span {
  flex: none;
  padding-top: 8px;
}
.stCoord {
  width: 174px;
  word-spacing: 1px;
}
.stFloor {
  width: 83px;
}
.stElev {
  width: 133px;
}
.stZero {
  width: 103px;
}
.stHide {
  width: 102px;
}
.sbtn {
  flex: none;
  align-self: flex-end;
  height: 19px;
  margin-right: 6px;
  border: 2px solid #aeaeb0;
  border-bottom: 0;
  display: flex;
  align-items: center;
  justify-content: center;
}
.sbOrtho {
  width: 23px;
}
.sbSel {
  width: 36px;
  background: #fff;
  border-color: #4a9cf0;
  border-bottom: 0;
}
.sbCross {
  width: 25px;
}
.sbDrop {
  width: 36px;
  margin-right: 3px;
}
.sbText {
  margin-right: 3px;
  color: #444;
}
.sbLayer {
  width: 73px;
}
.sbPoly {
  width: 60px;
}
.stHint {
  margin-left: 4px;
  width: 590px;
  color: #333;
}
```
